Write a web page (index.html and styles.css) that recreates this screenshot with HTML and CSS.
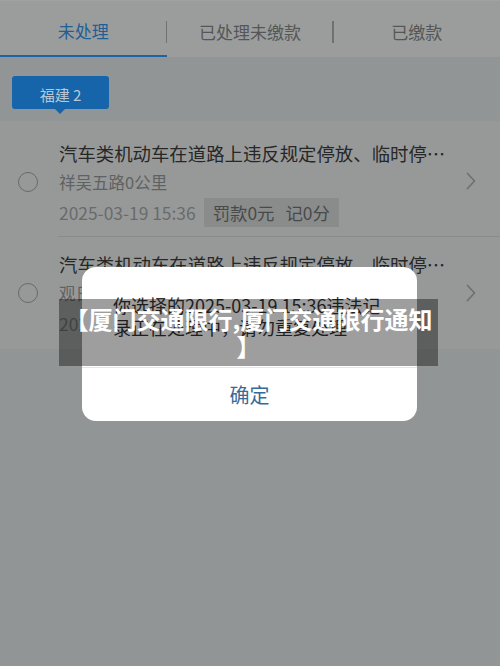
FILE: index.html
```html
<!DOCTYPE html>
<html lang="zh-CN">
<head>
<meta charset="utf-8">
<title>违法处理</title>
<link rel="stylesheet" href="styles.css">
</head>
<body>
<div class="app">
  <div class="tabs">
    <div class="tab active">未处理</div>
    <div class="tab">已处理未缴款</div>
    <div class="tab">已缴款</div>
  </div>
  <div class="filter">
    <span class="badge">福建 2</span>
  </div>
  <div class="list">
    <div class="item">
      <div class="check"><span class="radio"></span></div>
      <div class="body">
        <div class="info">
          <div class="title">汽车类机动车在道路上违反规定停放、临时停车且驾驶人不在现场</div>
          <div class="place">祥吴五路0公里</div>
          <div class="meta">
            <span class="date">2025-03-19 15:36</span>
            <span class="tag"><span>罚款0元</span><span>记0分</span></span>
          </div>
        </div>
        <svg class="chev" width="10" height="18" viewBox="0 0 10 18"><path d="M1.5 1.5 L8.5 9 L1.5 16.5" fill="none" stroke="#6f7272" stroke-width="1.8" stroke-linecap="round" stroke-linejoin="round"/></svg>
      </div>
    </div>
    <div class="item">
      <div class="check"><span class="radio"></span></div>
      <div class="body">
        <div class="info">
          <div class="title">汽车类机动车在道路上违反规定停放、临时停车且驾驶人不在现场</div>
          <div class="place">观日路0公里</div>
          <div class="meta">
            <span class="date">2025-03-19 15:36</span>
            <span class="tag"><span>罚款0元</span><span>记0分</span></span>
          </div>
        </div>
        <svg class="chev" width="10" height="18" viewBox="0 0 10 18"><path d="M1.5 1.5 L8.5 9 L1.5 16.5" fill="none" stroke="#6f7272" stroke-width="1.8" stroke-linecap="round" stroke-linejoin="round"/></svg>
      </div>
    </div>
  </div>
</div>

<div class="modal">
  <div class="modal-text">你选择的2025-03-19 15:36违法记录正在处理中，请勿重复处理</div>
  <div class="modal-btn">确定</div>
</div>

<div class="caption">【厦门交通限行,厦门交通限行通知】</div>
</body>
</html>
```

FILE: styles.css
```css
* { box-sizing: border-box; }
html, body {
  margin: 0;
  padding: 0;
}
body {
  width: 500px;
  height: 666px;
  overflow: hidden;
  background: #929595;
  font-family: "Noto Sans CJK SC", "Noto Sans", sans-serif;
  position: relative;
}
.app {
  display: flex;
  flex-direction: column;
}
.tabs {
  display: flex;
  height: 57px;
  background: #9b9d9d;
  border-top: 1px solid #a0a2a2;
}
.tab {
  flex: 1;
  display: flex;
  align-items: center;
  justify-content: center;
  font-size: 17px;
  color: #555757;
  position: relative;
  padding-top: 4px;
}
.tab + .tab::before {
  content: "";
  position: absolute;
  left: -1px;
  top: 20px;
  height: 22px;
  width: 1.5px;
  background: #6f7272;
}
.tab.active {
  color: #1f5f94;
  border-bottom: 2.5px solid #1d63a6;
}
.filter {
  padding: 19px 12px 0;
  height: 64px;
}
.badge {
  position: relative;
  display: inline-flex;
  align-items: center;
  justify-content: center;
  width: 97px;
  height: 33px;
  padding-top: 3px;
  background: #1664aa;
  border-radius: 3px;
  color: #b9c8d6;
  font-size: 15px;
}
.badge::after {
  content: "";
  position: absolute;
  left: 43px;
  bottom: -5px;
  border-left: 5px solid transparent;
  border-right: 5px solid transparent;
  border-top: 5px solid #1664aa;
}
.list {
  background: #979999;
  padding-top: 5px;
  height: 228px;
}
.item {
  display: flex;
  height: 111px;
}
.check {
  width: 58px;
  display: flex;
  align-items: center;
  padding-left: 18px;
}
.radio {
  width: 20px;
  height: 20px;
  border: 1.5px solid #676a6a;
  border-radius: 50%;
}
.body {
  flex: 1;
  min-width: 0;
  display: flex;
  align-items: center;
  border-bottom: 1px solid #898b8b;
  padding-right: 24px;
}
.item:last-child .body { border-bottom: none; }
.info {
  flex: 1;
  min-width: 0;
  padding: 15px 0 10px 1px;
  align-self: stretch;
}
.title {
  font-size: 18.4px;
  line-height: 24px;
  color: #262727;
  white-space: nowrap;
  overflow: hidden;
  text-overflow: ellipsis;
  width: 389px;
}
.place {
  margin-top: 4px;
  font-size: 16.5px;
  line-height: 26px;
  color: #5f6262;
}
.meta {
  margin-top: 2px;
  display: flex;
  align-items: center;
  gap: 8px;
  height: 30px;
}
.date {
  font-size: 17.4px;
  color: #686b6b;
}
.tag {
  display: inline-flex;
  align-items: center;
  gap: 11px;
  height: 29px;
  padding: 0 9px;
  background: #8a8c8c;
  font-size: 17.4px;
  color: #484a4a;
}
.chev {
  flex: none;
}

.modal {
  position: absolute;
  left: 82px;
  top: 267px;
  width: 335px;
  background: #ffffff;
  border-radius: 14px;
  overflow: hidden;
}
.modal-text {
  padding: 27px 31px 29px;
  font-size: 18px;
  line-height: 22px;
  color: #333333;
}
.modal-btn {
  height: 54px;
  border-top: 1px solid #e6e6e6;
  display: flex;
  align-items: center;
  justify-content: center;
  font-size: 20px;
  color: #376a99;
}

.caption {
  position: absolute;
  left: 59px;
  top: 299px;
  width: 379px;
  height: 67px;
  padding: 6px 0;
  background: rgba(0, 0, 0, 0.38);
  color: #ffffff;
  font-size: 24px;
  font-weight: bold;
  line-height: 27px;
  text-align: center;
  line-break: anywhere;
}
```
